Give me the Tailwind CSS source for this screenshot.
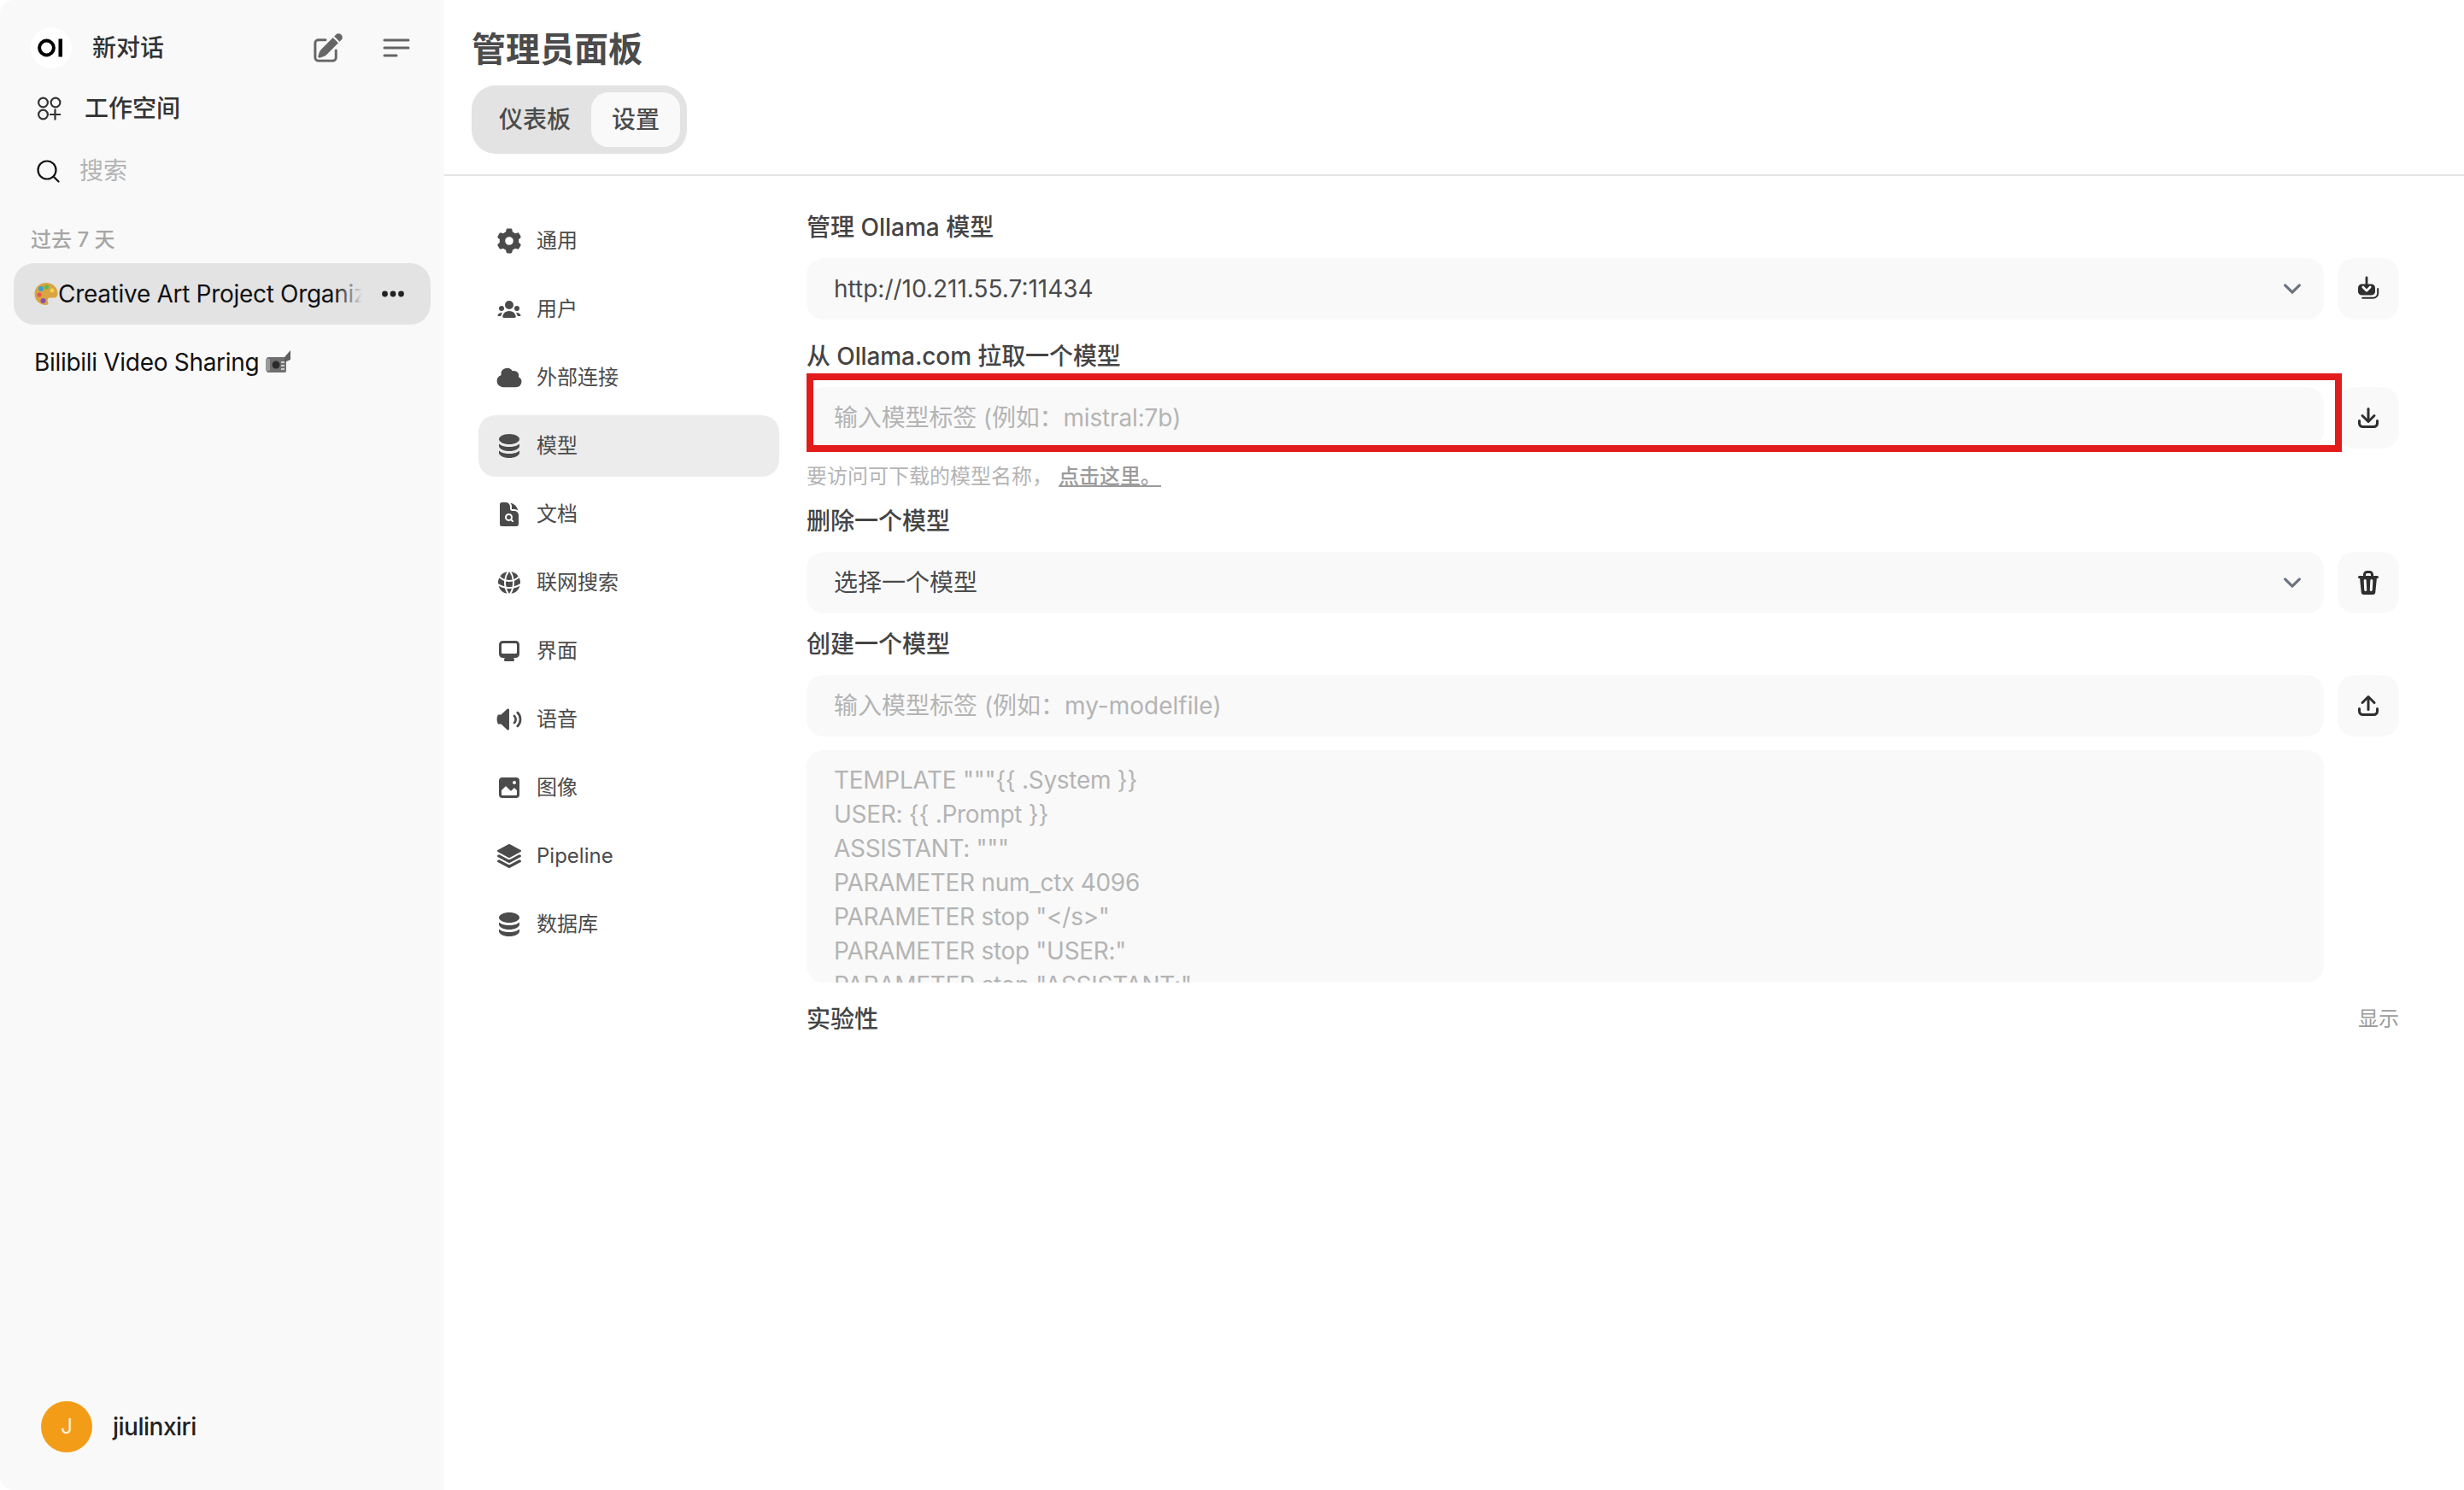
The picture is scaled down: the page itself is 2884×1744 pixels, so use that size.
<!DOCTYPE html>
<html lang="zh-CN">
<head>
  <meta charset="UTF-8">
  <title>管理员面板</title>
  <script src="https://cdn.jsdelivr.net/npm/@tailwindcss/browser@4"></script>
</head>
<body class="bg-white font-['Inter','Noto_Sans_CJK_SC',sans-serif] text-[#333]">
<div class="flex w-[2884px] h-[1744px] overflow-hidden relative">

  <!-- 侧边栏 -->
  <aside class="w-[520px] shrink-0 h-full bg-[#f9f9f9] rounded-l-2xl flex flex-col pt-8">
    <div class="h-12 flex items-center pl-9 pr-10">
      <div class="w-12 h-12 rounded-full bg-white flex items-center justify-center shrink-0">
        <svg width="32" height="24" viewBox="0 0 32 24"><circle cx="10.5" cy="12" r="8.4" fill="none" stroke="#000" stroke-width="4"/><rect x="24.5" y="1.5" width="4.5" height="21" fill="#000"/></svg>
      </div>
      <span class="ml-6 text-[28px] font-medium text-[#333]">新对话</span>
      <svg class="ml-auto" width="39" height="39" viewBox="0 0 24 24" fill="#666" stroke="#666" stroke-width="0.3"><path d="M21.731 2.269a2.625 2.625 0 0 0-3.712 0l-1.157 1.157 3.712 3.712 1.157-1.157a2.625 2.625 0 0 0 0-3.712ZM19.513 8.199l-3.712-3.712-8.4 8.4a5.25 5.25 0 0 0-1.32 2.214l-.8 2.685a.75.75 0 0 0 .933.933l2.685-.8a5.25 5.25 0 0 0 2.214-1.32l8.4-8.4Z"/><path d="M5.25 5.25a3 3 0 0 0-3 3v10.5a3 3 0 0 0 3 3h10.5a3 3 0 0 0 3-3V13.5a.75.75 0 0 0-1.5 0v5.25a1.5 1.5 0 0 1-1.5 1.5H5.25a1.5 1.5 0 0 1-1.5-1.5V8.25a1.5 1.5 0 0 1 1.5-1.5h5.25a.75.75 0 0 0 0-1.5H5.25Z"/></svg>
      <svg class="ml-[45px]" width="32" height="24" viewBox="0 0 32 24" fill="none" stroke="#666" stroke-width="3" stroke-linecap="round"><path d="M2 3h28M2 12h28M2 21h14"/></svg>
    </div>
    <div class="mt-[19px] h-14 flex items-center pl-11">
      <svg width="28" height="28" viewBox="0 0 28 28" fill="none" stroke="#333" stroke-width="2.2"><circle cx="6.5" cy="7" r="5.4"/><circle cx="21" cy="7" r="5.4"/><circle cx="6.5" cy="21" r="5.4"/><path d="M20.5 14.5v13M14 21h13"/></svg>
      <span class="ml-[27px] text-[28px] font-medium text-[#333]">工作空间</span>
    </div>
    <div class="mt-[17px] h-14 flex items-center pl-[43px]">
      <svg width="27" height="27" viewBox="0 0 27 27" fill="none" stroke="#111" stroke-width="2.2" stroke-linecap="round"><circle cx="12" cy="12" r="10.5"/><path d="M20 20l5.5 5.5"/></svg>
      <span class="ml-[23px] text-[28px] text-[#b4b4b4]">搜索</span>
    </div>
    <div class="mt-[37px] h-8 flex items-center pl-9 text-2xl font-medium text-[#a6a6a6]">过去 7 天</div>
    <div class="mt-[11px] mx-4 h-[72px] rounded-3xl bg-[#e3e3e3] flex items-center pl-6 pr-[30px] relative">
      <div class="w-[384px] overflow-hidden whitespace-nowrap text-[28px] tracking-[-0.3px] text-[#111] flex items-center relative">
        <svg class="shrink-0" width="28" height="30" viewBox="0 0 28 30"><path d="M14 2C6.5 2 .5 7.5.5 15S6.5 28 13.5 28c3 0 3.500-2 2.500-4-1-2.500.5-4.500 3-4.500h4c3 0 4.500-2 4.500-5C27.500 7.500 21.500 2 14 2Z" fill="#d9a441"/><circle cx="8" cy="9" r="3" fill="#3aa0d8"/><circle cx="14.500" cy="7" r="2.600" fill="#5dbb4b"/><circle cx="6" cy="16" r="2.600" fill="#e25555"/><circle cx="10.500" cy="23" r="3" fill="#8a4fb3"/><circle cx="21" cy="11" r="2.400" fill="#f3d64e"/></svg>
        <span>Creative Art Project Organize</span>
        <div class="absolute right-0 top-0 bottom-0 w-8 bg-gradient-to-r from-transparent to-[#e3e3e3]"></div>
      </div>
      <svg class="ml-auto" width="28" height="10" viewBox="0 0 28 10" fill="#222"><circle cx="4.5" cy="5" r="3.4"/><circle cx="14" cy="5" r="3.4"/><circle cx="23.5" cy="5" r="3.4"/></svg>
    </div>
    <div class="mt-2 mx-4 h-[72px] flex items-center pl-6 text-[28px] tracking-[-0.3px] text-[#111] whitespace-nowrap">
      <span>Bilibili Video Sharing</span>
      <svg class="ml-2 shrink-0" width="30" height="30" viewBox="0 0 30 30"><rect x="1" y="9" width="23" height="18" rx="2" fill="#6f6f6f"/><rect x="0" y="11" width="5" height="14" fill="#9a9a9a"/><path d="M22 9l7-8v11l-7 3z" fill="#5e5e5e"/><circle cx="12" cy="18" r="4.500" fill="#2a2a2a"/><rect x="18" y="14" width="4" height="2" fill="#ccc"/><rect x="18" y="18" width="4" height="2" fill="#ccc"/><rect x="18" y="22" width="4" height="2" fill="#ccc"/></svg>
    </div>
    <div class="mt-auto pb-[44px] pl-12 flex items-center">
      <div class="w-[60px] h-[60px] rounded-full bg-[#f39c17] text-[#fdf3dc] flex items-center justify-center text-2xl">J</div>
      <span class="ml-6 text-[28px] tracking-[-0.5px] font-medium text-[#222]">jiulinxiri</span>
    </div>
  </aside>

  <!-- 主体 -->
  <main class="flex-1 min-w-0 flex flex-col">
    <header class="pt-8 pb-6 pl-8 border-b-2 border-[#e5e5e5]">
      <h1 class="h-12 pt-1 flex items-center text-[40px] font-semibold text-[#4b4b4b]">管理员面板</h1>
      <div class="mt-5 h-20 w-fit p-2 rounded-[28px] bg-[#e3e3e3] flex text-[28px] font-medium text-[#4b4b4b]">
        <div class="px-6 flex items-center">仪表板</div>
        <div class="px-6 flex items-center rounded-[20px] bg-[#f9f9f9]">设置</div>
      </div>
    </header>

    <div class="flex-1 flex pl-10">
      <!-- 设置导航 -->
      <nav class="w-[352px] shrink-0 pt-10 flex flex-col gap-2 text-2xl text-[#4b4b4b]">
        <div class="h-[72px] rounded-[20px] px-5 flex items-center gap-4">
          <svg class="w-8 h-8" viewBox="0 0 20 20" fill="#4b4b4b"><path fill-rule="evenodd" clip-rule="evenodd" d="M7.84 1.804A1 1 0 018.82 1h2.36a1 1 0 01.98.804l.331 1.652a6.993 6.993 0 011.929 1.115l1.598-.54a1 1 0 011.186.447l1.18 2.044a1 1 0 01-.205 1.251l-1.267 1.113a7.047 7.047 0 010 2.228l1.267 1.113a1 1 0 01.206 1.25l-1.18 2.045a1 1 0 01-1.187.447l-1.598-.54a6.993 6.993 0 01-1.929 1.115l-.33 1.652a1 1 0 01-.98.804H8.82a1 1 0 01-.98-.804l-.331-1.652a6.993 6.993 0 01-1.929-1.115l-1.598.54a1 1 0 01-1.186-.447l-1.18-2.044a1 1 0 01.205-1.251l1.267-1.114a7.05 7.05 0 010-2.227L1.821 7.773a1 1 0 01-.206-1.25l1.18-2.045a1 1 0 011.187-.447l1.598.54A6.993 6.993 0 017.51 3.456l.33-1.652zM10 13a3 3 0 100-6 3 3 0 000 6z"/></svg>
          <span>通用</span>
        </div>
        <div class="h-[72px] rounded-[20px] px-5 flex items-center gap-4">
          <svg class="w-8 h-8" viewBox="0 0 16 16" fill="#4b4b4b"><path d="M8 8a2.5 2.5 0 1 0 0-5 2.5 2.5 0 0 0 0 5ZM3.156 11.763c.16-.629.44-1.21.813-1.72a2.5 2.5 0 0 0-2.725 1.377c-.136.287.102.58.418.58h1.449c.01-.077.025-.156.045-.237ZM12.847 11.763c.02.08.036.16.046.237h1.446c.316 0 .554-.293.417-.579a2.5 2.5 0 0 0-2.722-1.378c.374.51.653 1.09.813 1.72ZM14 7.5a1.5 1.5 0 1 1-3 0 1.5 1.5 0 0 1 3 0ZM3.5 9a1.5 1.5 0 1 0 0-3 1.5 1.5 0 0 0 0 3ZM5 13c-.552 0-1.013-.455-.876-.99a4.002 4.002 0 0 1 7.753 0c.136.535-.324.99-.877.99H5Z"/></svg>
          <span>用户</span>
        </div>
        <div class="h-[72px] rounded-[20px] px-5 flex items-center gap-4">
          <svg class="w-8 h-8" viewBox="0 0 20 20" fill="#4b4b4b"><path d="M1 12.5A4.5 4.5 0 005.5 17H15a4 4 0 001.866-7.539 3.504 3.504 0 00-4.504-4.272A4.5 4.5 0 004.06 8.235 4.502 4.502 0 001 12.5z"/></svg>
          <span>外部连接</span>
        </div>
        <div class="h-[72px] rounded-[20px] px-5 flex items-center gap-4 bg-[#ececec]">
          <svg class="w-8 h-8" viewBox="0 0 16 16" fill="#4b4b4b"><path d="M8 7c3.314 0 6-1.343 6-3s-2.686-3-6-3-6 1.343-6 3 2.686 3 6 3Z"/><path d="M8 8.5c1.84 0 3.579-.37 4.914-1.037A6.33 6.33 0 0 0 14 6.78V8c0 1.657-2.686 3-6 3S2 9.657 2 8V6.78c.346.273.72.5 1.087.683C4.42 8.131 6.16 8.5 8 8.5Z"/><path d="M8 12.5c1.84 0 3.579-.37 4.914-1.037.366-.183.74-.41 1.086-.684V12c0 1.657-2.686 3-6 3s-6-1.343-6-3v-1.22c.346.273.72.5 1.087.683C4.42 12.131 6.16 12.5 8 12.5Z"/></svg>
          <span>模型</span>
        </div>
        <div class="h-[72px] rounded-[20px] px-5 flex items-center gap-4">
          <svg class="w-8 h-8" viewBox="0 0 24 24" fill="#4b4b4b"><path d="M11.625 16.5a1.875 1.875 0 1 0 0-3.75 1.875 1.875 0 0 0 0 3.75Z"/><path fill-rule="evenodd" clip-rule="evenodd" d="M5.625 1.5H9a3.75 3.75 0 0 1 3.75 3.75v1.875c0 1.036.84 1.875 1.875 1.875H16.5a3.75 3.75 0 0 1 3.75 3.75v7.875c0 1.035-.84 1.875-1.875 1.875H5.625a1.875 1.875 0 0 1-1.875-1.875V3.375c0-1.036.84-1.875 1.875-1.875Zm6 16.5c.66 0 1.277-.19 1.797-.518l1.048 1.048a.75.75 0 0 0 1.06-1.06l-1.047-1.048A3.375 3.375 0 1 0 11.625 18Z"/><path d="M14.25 5.25a5.23 5.23 0 0 0-1.279-3.434 9.768 9.768 0 0 1 6.963 6.963A5.23 5.23 0 0 0 16.5 7.5h-1.875a.375.375 0 0 1-.375-.375V5.25Z"/></svg>
          <span>文档</span>
        </div>
        <div class="h-[72px] rounded-[20px] px-5 flex items-center gap-4">
          <svg class="w-8 h-8" viewBox="0 0 24 24" fill="#4b4b4b"><path d="M21.721 12.752a9.711 9.711 0 0 0-.945-5.003 12.754 12.754 0 0 1-4.339 2.708 18.991 18.991 0 0 1-.214 4.772 17.165 17.165 0 0 0 5.498-2.477ZM14.634 15.55a17.324 17.324 0 0 0 .332-4.647c-.952.227-1.945.347-2.966.347-1.021 0-2.014-.12-2.966-.347a17.515 17.515 0 0 0 .332 4.647 17.385 17.385 0 0 0 5.268 0ZM9.772 17.119a18.963 18.963 0 0 0 4.456 0A17.182 17.182 0 0 1 12 21.724a17.18 17.18 0 0 1-2.228-4.605ZM7.777 15.23a18.87 18.87 0 0 1-.214-4.774 12.753 12.753 0 0 1-4.34-2.708 9.711 9.711 0 0 0-.944 5.004 17.165 17.165 0 0 0 5.498 2.477ZM21.356 14.752a9.765 9.765 0 0 1-7.478 6.817 18.64 18.64 0 0 0 1.988-4.718 18.627 18.627 0 0 0 5.49-2.098ZM2.644 14.752c1.682.971 3.53 1.688 5.49 2.099a18.64 18.64 0 0 0 1.988 4.718 9.765 9.765 0 0 1-7.478-6.816ZM13.878 2.43a9.755 9.755 0 0 1 6.116 3.986 11.267 11.267 0 0 1-3.746 2.504 18.63 18.63 0 0 0-2.37-6.49ZM12 2.276a17.152 17.152 0 0 1 2.805 7.121c-.897.23-1.837.353-2.805.353-.968 0-1.908-.122-2.805-.353A17.151 17.151 0 0 1 12 2.276ZM10.122 2.43a18.629 18.629 0 0 0-2.37 6.49 11.266 11.266 0 0 1-3.746-2.504 9.754 9.754 0 0 1 6.116-3.985Z"/></svg>
          <span>联网搜索</span>
        </div>
        <div class="h-[72px] rounded-[20px] px-5 flex items-center gap-4">
          <svg class="w-8 h-8" viewBox="0 0 16 16" fill="#4b4b4b"><path fill-rule="evenodd" clip-rule="evenodd" d="M2 4.25A2.25 2.25 0 0 1 4.25 2h7.5A2.25 2.25 0 0 1 14 4.25v5.5A2.25 2.25 0 0 1 11.75 12h-1.312c.1.128.21.248.328.36a.75.75 0 0 1 .234.545v.345a.75.75 0 0 1-.75.75h-4.5a.75.75 0 0 1-.75-.75v-.345a.75.75 0 0 1 .234-.545c.118-.111.228-.232.328-.36H4.25A2.25 2.25 0 0 1 2 9.75v-5.5Zm2.25-.75a.75.75 0 0 0-.75.75v4.5c0 .414.336.75.75.75h7.5a.75.75 0 0 0 .75-.75v-4.5a.75.75 0 0 0-.75-.75h-7.5Z"/></svg>
          <span>界面</span>
        </div>
        <div class="h-[72px] rounded-[20px] px-5 flex items-center gap-4">
          <svg class="w-9 h-9 -mx-0.5" viewBox="0 0 20 20" fill="#4b4b4b"><path d="M10 3.75a.75.75 0 00-1.264-.546L4.703 7H3.167a.75.75 0 00-.7.48A6.985 6.985 0 002 10c0 .887.165 1.737.468 2.52.111.29.39.48.7.48h1.535l4.033 3.796A.75.75 0 0010 16.25V3.75zM15.95 5.05a.75.75 0 00-1.06 1.061 5.5 5.5 0 010 7.778.75.75 0 001.06 1.06 7 7 0 000-9.899z"/><path d="M13.829 7.172a.75.75 0 00-1.061 1.06 2.5 2.5 0 010 3.536.75.75 0 001.06 1.06 4 4 0 000-5.656z"/></svg>
          <span>语音</span>
        </div>
        <div class="h-[72px] rounded-[20px] px-5 flex items-center gap-4">
          <svg class="w-8 h-8" viewBox="0 0 16 16" fill="#4b4b4b"><path fill-rule="evenodd" clip-rule="evenodd" d="M2 4a2 2 0 0 1 2-2h8a2 2 0 0 1 2 2v8a2 2 0 0 1-2 2H4a2 2 0 0 1-2-2V4Zm10.5 5.707a.5.5 0 0 0-.146-.353l-1-1a.5.5 0 0 0-.708 0L9.354 9.646a.5.5 0 0 1-.708 0L6.354 7.354a.5.5 0 0 0-.708 0l-2 2a.5.5 0 0 0-.146.353V12a.5.5 0 0 0 .5.5h8a.5.5 0 0 0 .5-.5V9.707ZM12 5a1 1 0 1 1-2 0 1 1 0 0 1 2 0Z"/></svg>
          <span>图像</span>
        </div>
        <div class="h-[72px] rounded-[20px] px-5 flex items-center gap-4">
          <svg class="w-8 h-8" viewBox="0 0 24 24" fill="#4b4b4b"><path d="M11.644 1.59a.75.75 0 0 1 .712 0l9.75 5.25a.75.75 0 0 1 0 1.32l-9.75 5.25a.75.75 0 0 1-.712 0l-9.75-5.25a.75.75 0 0 1 0-1.32l9.75-5.25Z"/><path d="m3.265 10.602 7.668 4.129a2.25 2.25 0 0 0 2.134 0l7.668-4.13 1.37.739a.75.75 0 0 1 0 1.32l-9.75 5.25a.75.75 0 0 1-.71 0l-9.75-5.25a.75.75 0 0 1 0-1.32l1.37-.738Z"/><path d="m10.933 19.231-7.668-4.13-1.37.739a.75.75 0 0 0 0 1.32l9.75 5.25c.221.12.489.12.71 0l9.75-5.25a.75.75 0 0 0 0-1.32l-1.37-.738-7.668 4.13a2.25 2.25 0 0 1-2.134-.001Z"/></svg>
          <span>Pipeline</span>
        </div>
        <div class="h-[72px] rounded-[20px] px-5 flex items-center gap-4">
          <svg class="w-8 h-8" viewBox="0 0 16 16" fill="#4b4b4b"><path d="M8 7c3.314 0 6-1.343 6-3s-2.686-3-6-3-6 1.343-6 3 2.686 3 6 3Z"/><path d="M8 8.5c1.84 0 3.579-.37 4.914-1.037A6.33 6.33 0 0 0 14 6.78V8c0 1.657-2.686 3-6 3S2 9.657 2 8V6.78c.346.273.72.5 1.087.683C4.42 8.131 6.16 8.5 8 8.5Z"/><path d="M8 12.5c1.84 0 3.579-.37 4.914-1.037.366-.183.74-.41 1.086-.684V12c0 1.657-2.686 3-6 3s-6-1.343-6-3v-1.22c.346.273.72.5 1.087.683C4.42 12.131 6.16 12.5 8 12.5Z"/></svg>
          <span>数据库</span>
        </div>
      </nav>

      <!-- 模型设置 -->
      <section class="flex-1 min-w-0 ml-8 mr-[76px] pt-10 text-[28px]">
        <div class="h-10 flex items-center font-medium text-[#444]">管理 Ollama 模型</div>
        <div class="mt-4 flex gap-4">
          <div class="flex-1 relative">
            <select class="w-full h-[72px] pl-8 pr-16 rounded-[20px] bg-[#f9f9fa] appearance-none outline-none text-[#4b4b4b]">
              <option>http://10.211.55.7:11434</option>
            </select>
            <svg class="absolute right-4 top-[15px] pointer-events-none" width="42" height="42" viewBox="0 0 20 20" fill="none" stroke="#6b7280" stroke-width="1.5" stroke-linecap="round" stroke-linejoin="round"><path d="M6 8l4 4 4-4"/></svg>
          </div>
          <button class="w-[72px] h-[72px] rounded-[20px] bg-[#f9f9fa] flex items-center justify-center">
            <svg class="w-8 h-8" viewBox="0 0 16 16"><path d="M5 5.2H4.2A2.2 2.2 0 0 0 2 7.4v2.2a2.2 2.2 0 0 0 2.2 2.2h5.6A2.2 2.2 0 0 0 12 9.6V7.4a2.2 2.2 0 0 0-2.2-2.2H9Z" fill="#2f2f2f"/><path d="M7 1.5v6.5" stroke="#2f2f2f" stroke-width="1.4" stroke-linecap="round"/><path d="M4.9 7l2.1 2.2L9.1 7" fill="none" stroke="#fff" stroke-width="1.3" stroke-linecap="round" stroke-linejoin="round"/><path d="M13.6 8v2.6a2.8 2.8 0 0 1-2.8 2.8H4.6" fill="none" stroke="#2f2f2f" stroke-width="1" stroke-linecap="round"/></svg>
          </button>
        </div>

        <div class="mt-[23px] h-10 flex items-center font-medium text-[#444] tracking-[-0.1px]">从 Ollama.com 拉取一个模型</div>
        <div class="mt-4 flex gap-4">
          <input class="flex-1 h-[72px] px-8 rounded-[20px] bg-[#f9f9f9] outline-none tracking-[-0.15px] placeholder:text-[#b4b4b4]" placeholder="输入模型标签 (例如：mistral:7b)">
          <button class="w-[72px] h-[72px] rounded-[20px] bg-[#f9f9fa] flex items-center justify-center">
            <svg class="w-8 h-8" viewBox="0 0 16 16" fill="#2f2f2f"><path d="M8.75 2.75a.75.75 0 0 0-1.5 0v5.69L5.03 6.22a.75.75 0 0 0-1.06 1.06l3.5 3.5a.75.75 0 0 0 1.06 0l3.5-3.5a.75.75 0 0 0-1.06-1.06L8.75 8.44V2.75Z"/><path d="M3.5 9.75a.75.75 0 0 0-1.5 0v1.5A2.75 2.75 0 0 0 4.75 14h6.5A2.75 2.75 0 0 0 14 11.25v-1.5a.75.75 0 0 0-1.5 0v1.5c0 .69-.56 1.25-1.25 1.25h-6.5c-.69 0-1.25-.56-1.25-1.25v-1.5Z"/></svg>
          </button>
        </div>
        <div class="mt-[17px] h-8 flex items-center text-2xl text-[#b4b4b4]">
          <span>要访问可下载的模型名称，</span>
          <a class="ml-[7px] font-medium text-[#9b9b9b] underline">点击这里。</a>
        </div>

        <div class="mt-4 h-10 flex items-center font-medium text-[#444]">删除一个模型</div>
        <div class="mt-4 flex gap-4">
          <div class="flex-1 relative">
            <select class="w-full h-[72px] pl-8 pr-16 rounded-[20px] bg-[#f9f9fa] appearance-none outline-none text-[#4b4b4b]">
              <option>选择一个模型</option>
            </select>
            <svg class="absolute right-4 top-[15px] pointer-events-none" width="42" height="42" viewBox="0 0 20 20" fill="none" stroke="#6b7280" stroke-width="1.5" stroke-linecap="round" stroke-linejoin="round"><path d="M6 8l4 4 4-4"/></svg>
          </div>
          <button class="w-[72px] h-[72px] rounded-[20px] bg-[#f9f9fa] flex items-center justify-center">
            <svg class="w-8 h-8" viewBox="0 0 16 16" fill="#2f2f2f"><path fill-rule="evenodd" clip-rule="evenodd" d="M5 3.25V4H2.75a.75.75 0 0 0 0 1.5h.3l.815 8.15A1.5 1.5 0 0 0 5.357 15h5.285a1.5 1.5 0 0 0 1.493-1.35l.815-8.15h.3a.75.75 0 0 0 0-1.5H11v-.75A2.25 2.25 0 0 0 8.75 1h-1.5A2.25 2.25 0 0 0 5 3.25Zm2.25-.75a.75.75 0 0 0-.75.75V4h3v-.75a.75.75 0 0 0-.75-.75h-1.5ZM6.05 6a.75.75 0 0 1 .787.713l.275 5.5a.75.75 0 0 1-1.498.075l-.275-5.5A.75.75 0 0 1 6.05 6Zm3.9 0a.75.75 0 0 1 .712.787l-.275 5.5a.75.75 0 0 1-1.498-.075l.275-5.5a.75.75 0 0 1 .786-.711Z"/></svg>
          </button>
        </div>

        <div class="mt-4 h-10 flex items-center font-medium text-[#444]">创建一个模型</div>
        <div class="mt-4 flex gap-4">
          <input class="flex-1 h-[72px] px-8 rounded-[20px] bg-[#f9f9f9] outline-none placeholder:text-[#b4b4b4]" placeholder="输入模型标签 (例如：my-modelfile)">
          <button class="w-[72px] h-[72px] rounded-[20px] bg-[#f9f9fa] flex items-center justify-center">
            <svg class="w-8 h-8" viewBox="0 0 16 16" fill="#2f2f2f"><path d="M7.25 10.25a.75.75 0 0 0 1.5 0V4.56l2.22 2.22a.75.75 0 1 0 1.06-1.06l-3.5-3.5a.75.75 0 0 0-1.06 0l-3.5 3.5a.75.75 0 0 0 1.06 1.06l2.22-2.22v5.69Z"/><path d="M3.5 9.75a.75.75 0 0 0-1.5 0v1.5A2.75 2.75 0 0 0 4.75 14h6.5A2.75 2.75 0 0 0 14 11.25v-1.5a.75.75 0 0 0-1.5 0v1.5c0 .69-.56 1.25-1.25 1.25h-6.5c-.69 0-1.25-.56-1.25-1.25v-1.5Z"/></svg>
          </button>
        </div>
        <textarea class="mt-4 block w-[1776px] h-[272px] px-8 py-[15px] rounded-[20px] bg-[#f9f9f9] outline-none resize-none overflow-hidden leading-10 tracking-[-0.3px] placeholder:text-[#b4b4b4]" placeholder='TEMPLATE """{{ .System }}
USER: {{ .Prompt }}
ASSISTANT: """
PARAMETER num_ctx 4096
PARAMETER stop "&lt;/s&gt;"
PARAMETER stop "USER:"
PARAMETER stop "ASSISTANT:"'></textarea>

        <div class="mt-[23px] h-10 flex items-center justify-between">
          <span class="font-medium text-[#444]">实验性</span>
          <span class="text-2xl text-[#9b9b9b]">显示</span>
        </div>
      </section>
    </div>
  </main>

  <!-- 红色标注框 -->
  <div class="absolute left-[944px] top-[437px] w-[1797px] h-[92px] border-8 border-[#e21b1b]"></div>
</div>
</body>
</html>
